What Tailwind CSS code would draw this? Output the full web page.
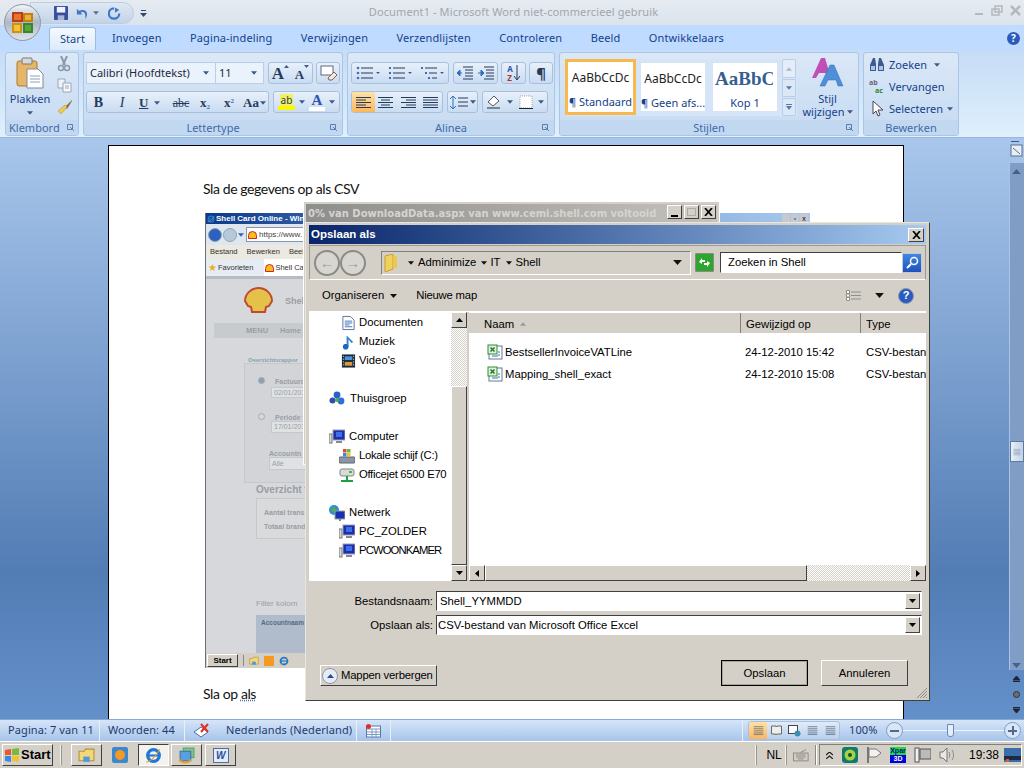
<!DOCTYPE html>
<html lang="en">
<head>
  <meta charset="UTF-8">
  <title>Document1 - Microsoft Word</title>
  <script src="https://cdn.jsdelivr.net/npm/@tailwindcss/browser@4"></script>
</head>
<body class="bg-[#d4d0c8] font-['Noto_Sans',sans-serif] overflow-hidden">
  <svg class="hidden">
    <symbol id="arr" viewBox="0 0 7 4"><path d="M0 0h7L3.5 4z"/></symbol>
    <symbol id="folder" viewBox="0 0 16 16"><path d="M1 4h5l1-2h8v11H1z" fill="#f4d67a" stroke="#b8912f"/><path d="M5 9h6v5H5z" fill="#4f9ad8"/></symbol>
    <symbol id="docs" viewBox="0 0 16 16"><path d="M2 1h8l4 4v10H2z" fill="#fff" stroke="#5c6f96"/><path d="M4 6h8M4 8h8M4 10h5M4 12h8" stroke="#3f6fc0"/></symbol>
    <symbol id="music" viewBox="0 0 16 16"><path d="M6 1l7 7-2 1-3-4v8H3l1-3h2z" fill="#2f7fd6"/><circle cx="5" cy="13" r="3" fill="#1f66c0"/></symbol>
    <symbol id="video" viewBox="0 0 16 16"><rect x="1" y="1" width="14" height="14" fill="#1d2a3a"/><rect x="4" y="3" width="8" height="4" fill="#4e94d8"/><rect x="4" y="9" width="8" height="4" fill="#d99a3d"/><path d="M2 3h1M2 6h1M2 9h1M2 12h1M13 3h1M13 6h1M13 9h1M13 12h1" stroke="#fff"/></symbol>
    <symbol id="group" viewBox="0 0 16 16"><circle cx="8" cy="4" r="3.4" fill="#2660c8"/><circle cx="3.5" cy="9.5" r="3" fill="#2f4fb0"/><circle cx="12" cy="10" r="3.4" fill="#2c70d8"/><circle cx="8" cy="9" r="2" fill="#4cae3c"/></symbol>
    <symbol id="pc" viewBox="0 0 16 16"><rect x="0" y="5" width="3" height="9" fill="#d8d8d0" stroke="#777"/><rect x="4" y="1" width="12" height="10" fill="#1c2fb0" stroke="#9aa0a8"/><path d="M7 3h6v5H7z" fill="#3f6fe8"/><path d="M7 13h6" stroke="#888" stroke-width="2"/></symbol>
    <symbol id="disk" viewBox="0 0 16 16"><rect x="0" y="9" width="16" height="6" rx="1" fill="#8b97a5" stroke="#5c6670"/><rect x="4" y="1" width="3.5" height="3.5" fill="#e5492f"/><rect x="8" y="1" width="3.5" height="3.5" fill="#6ab73a"/><rect x="4" y="5" width="3.5" height="3.5" fill="#3f88e0"/><rect x="8" y="5" width="3.5" height="3.5" fill="#f1c22e"/></symbol>
    <symbol id="printer" viewBox="0 0 16 16"><rect x="1" y="2" width="14" height="7" rx="2" fill="#d8dcd8" stroke="#808880"/><path d="M8 9v4M2 14h12" stroke="#20a040" stroke-width="2"/><rect x="10" y="4" width="3" height="2" fill="#50b050"/></symbol>
    <symbol id="net" viewBox="0 0 16 16"><circle cx="5" cy="5" r="5" fill="#2f8fd0"/><path d="M2 3l4-1 1 3-4 2z" fill="#50b040"/><rect x="6" y="6" width="10" height="8" fill="#1c2fb0" stroke="#9aa0a8"/><path d="M11 14v2" stroke="#888" stroke-width="2"/></symbol>
    <symbol id="xls" viewBox="0 0 16 16"><rect x="2" y="2" width="13" height="13" fill="#fff" stroke="#5c7aa0"/><rect x="1" y="1" width="9" height="9" fill="#dff0d8" stroke="#2f8a3a"/><path d="M3.5 3.5l4 4M7.500 3.500l-4 4" stroke="#207a2c" stroke-width="1.500"/><path d="M11 8h2M11 11h2M5 12h6" stroke="#3f6fa8"/></symbol>
    <symbol id="ie" viewBox="0 0 16 16"><circle cx="8" cy="8" r="5.500" fill="none" stroke="#1f78d8" stroke-width="3"/><path d="M3 8h10" stroke="#1f78d8" stroke-width="2"/><path d="M1 14c2 1 10-5 13-12" fill="none" stroke="#e8a020"/></symbol>
    <symbol id="lines" viewBox="0 0 16 14"><path d="M1 1.500h14M1 4.500h14M1 7.500h14M1 10.500h14M1 13h14" stroke="currentColor"/></symbol>
  </svg>

  <!-- Word window -->
  <div class="w-[1024px] h-[768px] flex flex-col relative overflow-hidden">
    <!-- Title row -->
    <div class="h-[25px] bg-gradient-to-b from-[#e6ebf1] to-[#dbe3ec] relative flex items-center justify-center text-[11px] text-[#a2a6ac] tracking-[0.1px] shrink-0">
      <span class="ml-[3px]">Document1 - Microsoft Word niet-commercieel gebruik</span>
      <div class="absolute right-[2px] top-[4px] flex gap-[5px] text-[#b4b8bf]">
        <svg class="w-[13px] h-[13px]" viewBox="0 0 13 13"><path d="M2 10h8" stroke="currentColor" stroke-width="2"/></svg>
        <svg class="w-[13px] h-[13px]" viewBox="0 0 13 13"><path d="M4 2h7v6H4zM1 5h7v6H1z" fill="none" stroke="currentColor" stroke-width="1.500"/></svg>
        <svg class="w-[13px] h-[13px]" viewBox="0 0 13 13"><path d="M2 2l9 9M11 2l-9 9" stroke="currentColor" stroke-width="2.500"/></svg>
      </div>
    </div>

    <!-- Quick access, over title row -->
    <div class="absolute left-[30px] top-[2px] w-[104px] h-[22px] rounded-r-[12px] bg-gradient-to-b from-[#dfe8f4] to-[#c2d3e8] border border-[#bfcde0] flex items-center pl-[23px] gap-[7px] z-10">
      <svg class="w-[14px] h-[14px]" viewBox="0 0 15 15"><rect width="15" height="15" rx="1" fill="#3a4f9a"/><rect x="3" y="1" width="9" height="6" fill="#eef2fb"/><rect x="4" y="10" width="7" height="5" fill="#a9b6d8"/></svg>
      <svg class="w-[14px] h-[13px]" viewBox="0 0 15 14"><path d="M2 2v6h6L6 6c3-2 6 0 5 7 4-5 2-12-7-9z" fill="#3f78c8"/></svg>
      <svg class="w-[6px] h-[4px] text-[#5a6f90] -ml-[3px]" fill="currentColor"><use href="#arr"/></svg>
      <svg class="w-[13px] h-[13px] ml-[2px]" viewBox="0 0 15 14"><path d="M7 1a6 6 0 1 0 6 6" fill="none" stroke="#3f78c8" stroke-width="2.500"/><path d="M8 0v6l5-3z" fill="#3f78c8"/></svg>
    </div>
    <svg class="absolute left-[140px] top-[10px] w-[7px] h-[7px] z-10 text-[#34486a]" viewBox="0 0 7 7"><path d="M1 0h5v1H1zM0 3h7L3.500 7z" fill="currentColor"/></svg>

    <!-- Office button -->
    <div class="absolute left-[4px] top-[4px] w-[37px] h-[37px] rounded-full bg-gradient-to-b from-[#f3f5f8] via-[#aeb9c7] to-[#dfe4ea] border border-[#8c97a6] z-20 flex items-center justify-center">
      <svg class="w-[23px] h-[23px]" viewBox="0 0 23 23"><path d="M2 2h9v8H2z" fill="#e9722c" stroke="#b5401a" stroke-width="2"/><path d="M13 3h8v7h-8z" fill="#eab23a" stroke="#c47f12" stroke-width="2"/><path d="M2 13h8v8H2z" fill="#f0c53a" stroke="#d09010" stroke-width="2"/><path d="M13 13h8v8h-8z" fill="#58a838" stroke="#3a8430" stroke-width="2"/></svg>
    </div>

    <!-- Tabs -->
    <div class="h-[25px] bg-[#bfdbff] flex items-end text-[11px] text-[#15428b] shrink-0 tracking-[0.1px]">
      <div class="ml-[49px] w-[47px] h-[23px] bg-gradient-to-b from-[#f4f9ff] to-[#dcebfb] border border-b-0 border-[#9ebbdd] rounded-t-[3px] flex items-center justify-center">Start</div>
      <div class="flex items-center h-[23px] gap-[28.500px] pl-[16px]">
        <span>Invoegen</span><span>Pagina-indeling</span><span>Verwijzingen</span><span>Verzendlijsten</span><span>Controleren</span><span>Beeld</span><span>Ontwikkelaars</span>
      </div>
      <div class="ml-auto mr-[3px] mb-[4px] w-[15px] h-[15px] rounded-full bg-[#2a5bc0] border border-[#dbe8f8] text-white text-[10px] font-bold flex items-center justify-center">?</div>
    </div>

    <!-- Ribbon -->
    <div class="h-[88px] bg-gradient-to-b from-[#c6dcf6] to-[#dff0fc] border-b border-[#9ab8dc] flex gap-[4px] pl-[5px] pr-[2px] pt-[2px] shrink-0 text-[#15428b] text-[11px]">
      <!-- Klembord -->
      <div class="w-[74px] h-[84px] rounded-[3px] border border-[#a9c6e6] bg-gradient-to-b from-[#dbe8f7] to-[#c5daf2] flex flex-col overflow-hidden">
        <div class="flex-1 flex">
          <div class="w-[48px] flex flex-col items-center pt-[4px]">
            <svg class="w-[28px] h-[32px]" viewBox="0 0 28 32"><rect x="1" y="4" width="20" height="25" rx="2" fill="#e6b568" stroke="#a87a30"/><rect x="6" y="1" width="10" height="6" rx="1" fill="#d8d8d8" stroke="#777"/><path d="M11 12h11l5 5v14H11z" fill="#fff" stroke="#7d8ba0"/><path d="M14 19h10M14 22h10M14 25h10" stroke="#8fa0b8"/></svg>
            <span class="mt-[2px] leading-[16px]">Plakken</span>
            <svg class="w-[6px] h-[4px] mt-[4px] text-[#3d5a8a]" fill="currentColor"><use href="#arr"/></svg>
          </div>
          <div class="flex-1 flex flex-col items-start pl-[3px] pt-[3px] gap-[6px]">
            <svg class="w-[14px] h-[16px]" viewBox="0 0 14 16"><path d="M4 0l4 9M10 0L6 9" stroke="#8d99a8" stroke-width="2"/><circle cx="4" cy="12" r="2.500" fill="none" stroke="#8d99a8" stroke-width="1.500"/><circle cx="10" cy="12" r="2.500" fill="none" stroke="#8d99a8" stroke-width="1.500"/></svg>
            <svg class="w-[15px] h-[15px]" viewBox="0 0 15 15"><path d="M1 1h7v9H1z" fill="#eef2f7" stroke="#9aa6b5"/><path d="M6 5h8v9H6z" fill="#f6f8fb" stroke="#9aa6b5"/><path d="M8 8h4M8 10h4" stroke="#9aa6b5"/></svg>
            <svg class="w-[16px] h-[16px]" viewBox="0 0 16 16"><path d="M15 1L8 8l2 2 5-8z" fill="#8d6a3a"/><path d="M8 6L1 12l3 3 6-7z" fill="#f0cb50" stroke="#a88a28" stroke-width="0.500"/></svg>
          </div>
        </div>
        <div class="h-[15px] pt-[1px] bg-[#c2d8f1] flex items-center px-[3px] justify-between text-[#3e6aaa]"><span>Klembord</span><svg class="w-[8px] h-[8px]" viewBox="0 0 8 8"><path d="M.5.5h5v5h-5zM3 3l4 4" fill="none" stroke="#5a7fb0"/></svg></div>
      </div>

      <!-- Lettertype -->
      <div class="w-[260px] h-[84px] rounded-[3px] border border-[#a9c6e6] bg-gradient-to-b from-[#dbe8f7] to-[#c5daf2] flex flex-col overflow-hidden">
        <div class="flex-1 pl-[2px] pt-[9px] flex flex-col gap-[7px]">
          <div class="flex h-[22px]">
            <div class="w-[130px] bg-[#eaf2fb] border border-[#b9cfe8] text-[#1c2a44] flex items-center justify-between pl-[3px] pr-[6px]"><span>Calibri (Hoofdtekst)</span><svg class="w-[6px] h-[4px] text-[#3d5a8a]" fill="currentColor"><use href="#arr"/></svg></div>
            <div class="w-[48px] bg-[#eaf2fb] border border-l-0 border-[#b9cfe8] text-[#1c2a44] flex items-center justify-between pl-[3px] pr-[6px]"><span>11</span><svg class="w-[6px] h-[4px] text-[#3d5a8a]" fill="currentColor"><use href="#arr"/></svg></div>
            <div class="ml-[4px] w-[45px] rounded-[3px] border border-[#a9c0dc] bg-gradient-to-b from-[#e8f0fa] to-[#c9dcf2] flex items-center justify-around font-['Liberation_Serif'] font-bold text-[#263a5a]">
              <span class="flex items-start"><span class="text-[17px] leading-none">A</span><svg class="w-[5px] h-[3px] rotate-180 text-[#3d5a8a]" fill="currentColor"><use href="#arr"/></svg></span>
              <span class="flex items-start"><span class="text-[13px] leading-none mt-[3px]">A</span><svg class="w-[5px] h-[3px] text-[#3d5a8a]" fill="currentColor"><use href="#arr"/></svg></span>
            </div>
            <div class="ml-[3px] w-[24px] rounded-[3px] border border-[#a9c0dc] bg-gradient-to-b from-[#e8f0fa] to-[#c9dcf2] flex items-center justify-center"><svg class="w-[17px] h-[16px]" viewBox="0 0 17 16"><rect x="1" y="1" width="12" height="9" fill="#fff" stroke="#5a6a80"/><path d="M8 13l6-6 3 3-5 5H9z" fill="#f4e8e0" stroke="#806050"/></svg></div>
          </div>
          <div class="flex h-[22px]">
            <div class="w-[183px] rounded-[3px] border border-[#a9c0dc] bg-gradient-to-b from-[#e8f0fa] to-[#c9dcf2] grid grid-cols-[23px_24px_35px_24px_24px_24px_29px] items-center text-center font-['Liberation_Serif'] text-[#263a5a]">
              <span class="font-bold text-[14px]">B</span><span class="italic text-[14px]">I</span>
              <span class="flex items-center pl-[5px] gap-[6px]"><span class="underline font-bold text-[13px]">U</span><svg class="w-[6px] h-[4px] text-[#3d5a8a]" fill="currentColor"><use href="#arr"/></svg></span>
              <span class="line-through text-[12px]">abc</span><span class="font-bold text-[13px]">x<sub class="text-[7px] text-[#3f6fb0]">2</sub></span><span class="font-bold text-[13px]">x<sup class="text-[7px] text-[#3f6fb0]">2</sup></span>
              <span class="flex items-center pl-[2px] gap-[1px]"><span class="font-bold text-[13px]">Aa</span><svg class="w-[6px] h-[4px] text-[#3d5a8a]" fill="currentColor"><use href="#arr"/></svg></span>
            </div>
            <div class="ml-[4px] w-[67px] rounded-[3px] border border-[#a9c0dc] bg-gradient-to-b from-[#e8f0fa] to-[#c9dcf2] flex items-center justify-around px-[2px]">
              <div class="flex flex-col items-center"><span class="text-[10px] leading-[12px] text-[#263a5a] bg-[#f2f060] px-[1px]">ab</span><div class="w-[17px] h-[4px] bg-[#f8f800]"></div></div>
              <svg class="w-[6px] h-[4px] text-[#3d5a8a]" fill="currentColor"><use href="#arr"/></svg>
              <div class="flex flex-col items-center"><span class="font-['Liberation_Serif'] font-bold text-[15px] leading-[14px] text-[#2a55a8]">A</span><div class="w-[16px] h-[4px] bg-white"></div></div>
              <svg class="w-[6px] h-[4px] text-[#3d5a8a]" fill="currentColor"><use href="#arr"/></svg>
            </div>
          </div>
        </div>
        <div class="h-[15px] pt-[1px] bg-[#c2d8f1] flex items-center justify-center relative text-[#3e6aaa]"><span>Lettertype</span><svg class="absolute right-[4px] w-[8px] h-[8px]" viewBox="0 0 8 8"><path d="M.5.5h5v5h-5zM3 3l4 4" fill="none" stroke="#5a7fb0"/></svg></div>
      </div>

      <!-- Alinea -->
      <div class="w-[208px] h-[84px] rounded-[3px] border border-[#a9c6e6] bg-gradient-to-b from-[#dbe8f7] to-[#c5daf2] flex flex-col overflow-hidden">
        <div class="flex-1 pl-[3px] pt-[9px] flex flex-col gap-[7px] text-[#263a5a]">
          <div class="flex h-[22px]">
            <div class="w-[98px] rounded-[3px] border border-[#a9c0dc] bg-gradient-to-b from-[#e8f0fa] to-[#c9dcf2] grid grid-cols-3 items-center justify-items-center">
              <svg class="w-[24px] h-[14px]" viewBox="0 0 24 14"><path d="M5 2h12M5 7h12M5 12h12" stroke="#263a5a"/><circle cx="2" cy="2" r="1.300" fill="#3f6fb0"/><circle cx="2" cy="7" r="1.300" fill="#3f6fb0"/><circle cx="2" cy="12" r="1.300" fill="#3f6fb0"/><path d="M20 6h4l-2 2z" fill="#3d5a8a"/></svg>
              <svg class="w-[24px] h-[14px]" viewBox="0 0 24 14"><path d="M5 2h12M5 7h12M5 12h12" stroke="#263a5a"/><path d="M1 1h2v2H1zM1 6h2v2H1zM1 11h2v2H1z" fill="#3f6fb0"/><path d="M20 6h4l-2 2z" fill="#3d5a8a"/></svg>
              <svg class="w-[24px] h-[14px]" viewBox="0 0 24 14"><path d="M5 2h12M9 7h8M12 12h5" stroke="#263a5a"/><path d="M1 1h2v2H1zM5 6h2v2H5zM8 11h2v2H8z" fill="#3f6fb0"/><path d="M20 6h4l-2 2z" fill="#3d5a8a"/></svg>
            </div>
            <div class="ml-[4px] w-[45px] rounded-[3px] border border-[#a9c0dc] bg-gradient-to-b from-[#e8f0fa] to-[#c9dcf2] flex items-center justify-around">
              <svg class="w-[16px] h-[14px]" viewBox="0 0 16 14"><path d="M6 1h10M8 4h8M8 7h8M8 10h8M6 13h10" stroke="#263a5a"/><path d="M5 7H0M0 7l3-3v6z" fill="#2f6fc0" stroke="#2f6fc0"/></svg>
              <svg class="w-[16px] h-[14px]" viewBox="0 0 16 14"><path d="M6 1h10M8 4h8M8 7h8M8 10h8M6 13h10" stroke="#263a5a"/><path d="M0 7h5M6 7L3 4v6z" fill="#2f6fc0" stroke="#2f6fc0"/></svg>
            </div>
            <div class="ml-[3px] w-[25px] rounded-[3px] border border-[#a9c0dc] bg-gradient-to-b from-[#e8f0fa] to-[#c9dcf2] flex items-center justify-center gap-[1px] font-bold text-[8px] leading-[9px]"><span class="flex flex-col"><span class="text-[#2a55a8]">A</span><span class="text-[#b03030]">Z</span></span><svg class="w-[6px] h-[16px]" viewBox="0 0 6 16"><path d="M3 0v14M0 11l3 4 3-4" fill="none" stroke="#263a5a"/></svg></div>
            <div class="ml-[3px] w-[24px] rounded-[3px] border border-[#a9c0dc] bg-gradient-to-b from-[#e8f0fa] to-[#c9dcf2] flex items-center justify-center font-bold text-[15px] leading-none">¶</div>
          </div>
          <div class="flex h-[22px]">
            <div class="w-[92px] rounded-[3px] border border-[#a9c0dc] bg-gradient-to-b from-[#e8f0fa] to-[#c9dcf2] grid grid-cols-4 items-center justify-items-center overflow-hidden">
              <div class="w-full h-full bg-gradient-to-b from-[#fde3a8] to-[#fbb65c] flex items-center justify-center"><svg class="w-[15px] h-[11px]" viewBox="0 0 15 11"><path d="M0 .5h15M0 3h10M0 5.500h15M0 8h10M0 10.500h15" stroke="#263a5a"/></svg></div>
              <svg class="w-[15px] h-[11px]" viewBox="0 0 15 11"><path d="M0 .5h15M3 3h9M0 5.500h15M3 8h9M0 10.500h15" stroke="#263a5a"/></svg>
              <svg class="w-[15px] h-[11px]" viewBox="0 0 15 11"><path d="M0 .5h15M5 3h10M0 5.500h15M5 8h10M0 10.500h15" stroke="#263a5a"/></svg>
              <svg class="w-[15px] h-[11px]" viewBox="0 0 15 11"><path d="M0 .5h15M0 3h15M0 5.500h15M0 8h15M0 10.500h15" stroke="#263a5a"/></svg>
            </div>
            <div class="ml-[4px] w-[31px] rounded-[3px] border border-[#a9c0dc] bg-gradient-to-b from-[#e8f0fa] to-[#c9dcf2] flex items-center justify-center gap-[1px]"><svg class="w-[19px] h-[15px]" viewBox="0 0 19 15"><path d="M3 1v13M0 4l3-3 3 3M0 11l3 3 3-3" fill="none" stroke="#2f6fc0"/><path d="M8 3h10M8 7h10M8 11h10" stroke="#263a5a"/></svg><svg class="w-[6px] h-[4px] text-[#3d5a8a]" fill="currentColor"><use href="#arr"/></svg></div>
            <div class="ml-[4px] w-[66px] rounded-[3px] border border-[#a9c0dc] bg-gradient-to-b from-[#e8f0fa] to-[#c9dcf2] flex items-center justify-around">
              <svg class="w-[16px] h-[16px]" viewBox="0 0 16 16"><path d="M2 8l6-6 5 5-6 5z" fill="#fff" stroke="#556"/><path d="M1 14h13" stroke="#788" stroke-width="2"/></svg>
              <svg class="w-[6px] h-[4px] text-[#3d5a8a]" fill="currentColor"><use href="#arr"/></svg>
              <svg class="w-[14px] h-[14px]" viewBox="0 0 14 14"><path d="M1 1h12v12H1z" fill="#fff" stroke="#9ab" stroke-dasharray="1 1"/><path d="M0 13.500h14" stroke="#223"/></svg>
              <svg class="w-[6px] h-[4px] text-[#3d5a8a]" fill="currentColor"><use href="#arr"/></svg>
            </div>
          </div>
        </div>
        <div class="h-[15px] pt-[1px] bg-[#c2d8f1] flex items-center justify-center relative text-[#3e6aaa]"><span>Alinea</span><svg class="absolute right-[4px] w-[8px] h-[8px]" viewBox="0 0 8 8"><path d="M.5.5h5v5h-5zM3 3l4 4" fill="none" stroke="#5a7fb0"/></svg></div>
      </div>

      <!-- Stijlen -->
      <div class="w-[300px] h-[84px] rounded-[3px] border border-[#a9c6e6] bg-gradient-to-b from-[#dbe8f7] to-[#c5daf2] flex flex-col overflow-hidden">
        <div class="flex-1 flex pl-[5px] pt-[6px]">
          <div class="w-[232px] h-[57px] bg-[#d5e4f6] flex items-start">
            <div class="w-[71px] h-[56px] border-[3px] border-[#f8b850] bg-white text-center text-[#15428b] shrink-0 overflow-hidden">
              <div class="text-[12px] leading-[16px] mt-[8px] text-[#222] whitespace-nowrap">AaBbCcDc</div>
              <div class="text-[11px] leading-[16px] mt-[8px] whitespace-nowrap">¶ Standaard</div>
            </div>
            <div class="ml-[5px] mt-[4px] w-[64px] h-[48px] bg-white text-center text-[#15428b] shrink-0 overflow-hidden">
              <div class="text-[12px] leading-[16px] mt-[8px] text-[#222] whitespace-nowrap">AaBbCcDc</div>
              <div class="text-[11px] leading-[16px] mt-[8px] whitespace-nowrap">¶ Geen afs...</div>
            </div>
            <div class="ml-[8px] mt-[4px] w-[64px] h-[48px] bg-white text-center text-[#15428b] shrink-0 overflow-hidden">
              <div class="font-['Liberation_Serif'] font-bold text-[#365f91] text-[19px] leading-[16px] mt-[8px] whitespace-nowrap text-left pl-[2px] w-[60px] overflow-hidden">AaBbCc</div>
              <div class="text-[11px] leading-[16px] mt-[8px]">Kop 1</div>
            </div>
            <div class="ml-[5px] w-[14px] h-[57px] flex flex-col gap-[1px] shrink-0">
              <div class="h-[19px] rounded-t-[2px] bg-[#e4edf8] border border-[#b9cfe8] flex items-center justify-center text-[#a9b6c8]"><svg class="w-[6px] h-[4px] rotate-180" fill="currentColor"><use href="#arr"/></svg></div>
              <div class="h-[18px] bg-[#dce8f6] border border-[#b9cfe8] flex items-center justify-center text-[#5a7aa8]"><svg class="w-[6px] h-[4px]" fill="currentColor"><use href="#arr"/></svg></div>
              <div class="h-[18px] rounded-b-[2px] bg-[#dce8f6] border border-[#b9cfe8] flex items-center justify-center text-[#5a7aa8]"><svg class="w-[6px] h-[6px]" viewBox="0 0 6 6" fill="currentColor"><path d="M0 0h6v1H0zM0 2h6L3 6z"/></svg></div>
            </div>
          </div>
          <div class="flex-1 flex flex-col items-center">
            <svg class="w-[32px] h-[32px] -mt-[1px]" viewBox="0 0 32 32"><path d="M0 20L9 0h4l6 20h-4l-1-5H7l-3 5z" fill="#c050b8"/><path d="M8 28L18 7h4l9 21h-5l-2-6h-8l-3 6z" fill="#4f8fd8" stroke="#2f6fb8" stroke-width="0.500"/></svg>
            <span class="leading-[13px] mt-[2px]">Stijl</span>
            <span class="leading-[13px] flex items-center gap-[2px]">wijzigen <svg class="w-[6px] h-[4px] text-[#3d5a8a]" fill="currentColor"><use href="#arr"/></svg></span>
          </div>
        </div>
        <div class="h-[15px] pt-[1px] bg-[#c2d8f1] flex items-center justify-center relative text-[#3e6aaa]"><span>Stijlen</span><svg class="absolute right-[4px] w-[8px] h-[8px]" viewBox="0 0 8 8"><path d="M.5.5h5v5h-5zM3 3l4 4" fill="none" stroke="#5a7fb0"/></svg></div>
      </div>

      <!-- Bewerken -->
      <div class="w-[96px] h-[84px] rounded-[3px] border border-[#a9c6e6] bg-gradient-to-b from-[#dbe8f7] to-[#c5daf2] flex flex-col overflow-hidden">
        <div class="flex-1 flex flex-col pl-[5px] pt-[1px]">
          <div class="h-[22px] flex items-center gap-[4px]"><svg class="w-[16px] h-[14px]" viewBox="0 0 16 14"><path d="M4 0h2l1 6v7H1V7zM10 0h2l3 7v6H9V6z" fill="#3f5a90"/><rect x="2" y="8" width="4" height="4" fill="#a9c4e6"/><rect x="10" y="8" width="4" height="4" fill="#a9c4e6"/></svg><span>Zoeken</span><svg class="w-[6px] h-[4px] ml-[3px] text-[#3d5a8a]" fill="currentColor"><use href="#arr"/></svg></div>
          <div class="h-[22px] flex items-center"><span class="w-[16px] flex flex-col font-bold text-[7px] leading-[8px]"><span class="text-[#667]">ab</span><span class="text-[#2a8a30] pl-[6px]">ac</span></span><span class="ml-[4px]">Vervangen</span></div>
          <div class="h-[22px] flex items-center gap-[4px] pl-[3px]"><svg class="w-[13px] h-[16px]" viewBox="0 0 13 16"><path d="M1 0v13l3-3 2 5 2-1-2-5h5z" fill="#fff" stroke="#445"/></svg><span>Selecteren</span><svg class="w-[6px] h-[4px] text-[#3d5a8a]" fill="currentColor"><use href="#arr"/></svg></div>
        </div>
        <div class="h-[15px] pt-[1px] bg-[#c2d8f1] flex items-center justify-center text-[#3e6aaa]">Bewerken</div>
      </div>
    </div>

    <!-- Document area -->
    <div class="flex-1 flex min-h-0 bg-gradient-to-b from-[#a9c7ec] via-[#527cb4] via-75% to-[#6490ca] relative">
      <div class="w-[108px] shrink-0"></div>
      <div class="w-[796px] mt-[7px] bg-white border-x border-t border-black pl-[94px] font-['Lato'] text-[14px] tracking-[-0.4px] text-[#111] relative">
        <p class="mt-[33px] leading-[20px]">Sla de gegevens op als CSV</p>
        <p class="absolute left-[94px] top-[538px] leading-[20px]">Sla op <span class="underline decoration-dotted decoration-[#3f6fc0]">als</span></p>
      </div>
      <!-- Vertical scrollbar -->
      <div class="ml-auto w-[16px] mr-0 flex flex-col items-center">
        <svg class="w-[13px] h-[19px] mt-[3px]" viewBox="0 0 13 19"><path d="M1 .5h8" stroke="#3d5a8a"/><rect x="1" y="4" width="11" height="11" fill="#e8eef6" stroke="#5a6f90"/><path d="M3 7l7 6" stroke="#5a6f90"/></svg>
        <div class="w-[15px] h-[507px] mt-[3px] bg-[#7f9dc5] border-l border-[#a9c4e6] flex flex-col items-center relative">
          <svg class="w-[9px] h-[5px] mt-[6px] rotate-180 text-[#45608c]" fill="currentColor"><use href="#arr"/></svg>
          <div class="absolute top-[278px] left-0 w-[14px] h-[21px] bg-gradient-to-r from-[#e9eff7] to-[#c3d3e6] border border-[#5d7aa5] flex items-center justify-center text-[#76869c]"><svg class="w-[8px] h-[8px]" viewBox="0 0 16 14"><use href="#lines"/></svg></div>
          <svg class="w-[9px] h-[5px] mt-auto mb-[2px] text-[#45608c]" fill="currentColor"><use href="#arr"/></svg>
        </div>
        <svg class="w-[7px] h-[7px] mt-[6px]" viewBox="0 0 7 7"><path d="M3.500 0L7 4H0zM0 5.500h7" fill="#223" stroke="#223"/></svg>
        <div class="w-[7px] h-[7px] rounded-full bg-[#6c6c6c] border border-[#333] mt-[8px]"></div>
        <svg class="w-[7px] h-[7px] mt-[8px]" viewBox="0 0 7 7"><path d="M0 1.500h7M3.500 7L0 3h7z" fill="#223" stroke="#223"/></svg>
      </div>
    </div>

    <!-- Status bar -->
    <div class="h-[22px] bg-gradient-to-b from-[#d6e5f8] to-[#a6c4ea] border-t border-[#86a8d4] flex items-center text-[11px] tracking-[0.1px] text-[#1f3a70] shrink-0 whitespace-nowrap">
      <span class="w-[100px] pl-[8px] border-r border-[#e6effa] h-full flex items-center">Pagina: 7 van 11</span>
      <span class="w-[85px] pl-[8px] border-r border-[#e6effa] h-full flex items-center">Woorden: 44</span>
      <div class="w-[172px] pl-[8px] border-r border-[#e6effa] h-full flex items-center gap-[16px]">
        <svg class="w-[17px] h-[15px] shrink-0" viewBox="0 0 17 15"><path d="M1 9l7-5 7 5-7 5z" fill="#fff" stroke="#4a6ea8"/><path d="M8 1l7 8M15 1l-7 8" stroke="#e03020" stroke-width="2"/></svg>
        <span>Nederlands (Nederland)</span>
      </div>
      <div class="w-[34px] border-r border-[#e6effa] h-full flex items-center justify-center">
        <svg class="w-[15px] h-[14px]" viewBox="0 0 15 14"><rect x="0.500" y="2" width="14" height="11" fill="#fff" stroke="#5a78a8"/><path d="M1 5h13M1 8h13M1 10.500h13M6 5v8M10 5v8" stroke="#7a9ac8"/><circle cx="2.500" cy="2.500" r="2.500" fill="#e03020"/></svg>
      </div>
      <div class="ml-auto h-full flex items-center border-l border-[#e6effa] pl-[5px] pr-[3px] gap-[9px]">
        <div class="w-[92px] h-[19px] rounded-[3px] border border-[#a9c0dc] bg-gradient-to-b from-[#e2ecf8] to-[#b9d0ec] grid grid-cols-5 items-center justify-items-center overflow-hidden text-[#4a5a70]">
          <div class="w-full h-full bg-gradient-to-b from-[#fde3a8] to-[#fbb65c] flex items-center justify-center"><svg class="w-[11px] h-[11px]" viewBox="0 0 16 14"><use href="#lines"/></svg></div>
          <svg class="w-[11px] h-[11px]" viewBox="0 0 11 11"><path d="M.5 1h4.500l.500 1 .500-1h4.500v8h-5l-.500 1-.500-1H.5z" fill="#eee" stroke="#6a6a60"/></svg>
          <svg class="w-[13px] h-[12px]" viewBox="0 0 13 12"><rect x=".5" y=".5" width="9" height="8" fill="#fff" stroke="#445"/><circle cx="9.500" cy="8.500" r="3" fill="#3a90b0"/></svg>
          <svg class="w-[11px] h-[11px]" viewBox="0 0 16 14"><use href="#lines"/></svg>
          <svg class="w-[11px] h-[11px]" viewBox="0 0 16 14"><use href="#lines"/></svg>
        </div>
        <span class="w-[28px]">100%</span>
        <div class="w-[135px] flex items-center">
          <div class="w-[17px] h-[17px] rounded-full bg-[#d9e6f6] border border-[#7f9dc5] flex items-center justify-center shrink-0"><div class="w-[9px] h-[2px] bg-[#55698a]"></div></div>
          <div class="flex-1 h-[1px] bg-[#eef4fb] relative"><div class="absolute left-[44px] -top-[6px] w-[7px] h-[13px] bg-[#e4edf8] border border-[#6c8ab4] rounded-b-[3px]"></div></div>
          <div class="w-[17px] h-[17px] rounded-full bg-[#d9e6f6] border border-[#7f9dc5] flex items-center justify-center shrink-0 relative"><div class="w-[9px] h-[2px] bg-[#55698a]"></div><div class="absolute w-[2px] h-[9px] bg-[#55698a]"></div></div>
        </div>
      </div>
    </div>

    <!-- Windows taskbar -->
    <div class="h-[27px] bg-[#d4d0c8] border-t border-white flex items-center pl-[2px] pr-[2px] shrink-0 text-[12px] text-black font-['Liberation_Sans']">
      <div class="w-[52px] h-[22px] bg-[#d4d0c8] border border-t-white border-l-white border-r-[#404040] border-b-[#404040] flex items-center gap-[1px] pl-[1px] font-bold text-[13px]">
        <svg class="w-[16px] h-[16px]" viewBox="0 0 16 16"><path d="M1 3l6-1v6H1z" fill="#e8582a"/><path d="M8 2l7-1v7H8z" fill="#7cb83a"/><path d="M1 9h6v6l-6-1z" fill="#3f88e0"/><path d="M8 9h7v6l-7-1z" fill="#f1c22e"/></svg>
        <span>Start</span>
      </div>
      <div class="ml-[7px] w-[2px] h-[20px] bg-[#f2f0ea] border-r border-[#9a968c]"></div>
      <div class="ml-[9px] w-[32px] h-[22px] border border-t-white border-l-white border-r-[#404040] border-b-[#404040] flex items-center justify-center"><svg class="w-[17px] h-[17px]"><use href="#folder"/></svg></div>
      <div class="ml-[10px] w-[16px] h-[16px] rounded-[2px] bg-[#3f88d0] flex items-center justify-center"><div class="w-[10px] h-[10px] rounded-full bg-[#f49a20]"></div></div>
      <div class="ml-[10px] w-[32px] h-[22px] bg-[#f4f2ee] border border-t-[#404040] border-l-[#404040] border-r-white border-b-white flex items-center justify-center"><svg class="w-[17px] h-[17px]"><use href="#ie"/></svg></div>
      <div class="ml-[2px] w-[32px] h-[22px] border border-t-white border-l-white border-r-[#404040] border-b-[#404040] flex items-center justify-center"><svg class="w-[17px] h-[17px]" viewBox="0 0 16 16"><rect x="5" y="1" width="10" height="9" fill="#8fbf80" stroke="#4a7"/><rect x="2" y="4" width="10" height="9" fill="#5aa0e0" stroke="#37a"/><path d="M1 12c4 4 9 3 11 0" fill="none" stroke="#e8a020" stroke-width="2"/></svg></div>
      <div class="ml-[3px] w-[32px] h-[22px] border border-t-white border-l-white border-r-[#404040] border-b-[#404040] flex items-center justify-center"><div class="w-[16px] h-[15px] bg-[#e4eaf6] border border-[#4a6ea8] text-[#2a4f9a] font-bold italic text-[10px] leading-[13px] text-center">W</div></div>
      <div class="ml-[519px] w-[2px] h-[20px] bg-[#f2f0ea] border-r border-[#9a968c]"></div>
      <span class="ml-[9px] w-[15px]">NL</span>
      <div class="ml-[4px] w-[2px] h-[20px] bg-[#f2f0ea] border-r border-[#9a968c]"></div>
      <svg class="ml-[6px] w-[16px] h-[13px] text-[#8c8a84]" viewBox="0 0 16 13"><rect x=".5" y="4" width="15" height="8" fill="#d4d0c8" stroke="currentColor"/><path d="M3 6h10M3 8h10M5 10h6M8 4c0-3 5-1 5-4" fill="none" stroke="currentColor"/></svg>
      <div class="ml-[6px] w-[2px] h-[20px] bg-[#888] border-r border-white"></div>
      <div class="ml-[2px] flex-1 h-[22px] border border-t-[#808080] border-l-[#808080] border-r-white border-b-white flex items-center pl-[6px] relative">
        <svg class="w-[7px] h-[7px]" viewBox="0 0 7 7"><path d="M0 3l3.500-3L7 3M0 7l3.500-3L7 7" fill="none" stroke="#222" stroke-width="1.200"/></svg>
        <svg class="ml-[9px] w-[16px] h-[16px]" viewBox="0 0 16 16"><rect width="16" height="16" rx="3" fill="#0f7a6a"/><circle cx="8" cy="8" r="5.500" fill="#a8d040"/><circle cx="8" cy="8" r="2" fill="#145030"/></svg>
        <svg class="ml-[8px] w-[17px] h-[16px]" viewBox="0 0 17 16"><path d="M2 0v16" stroke="#777" stroke-width="2"/><path d="M3 2h7l5 4-5 4H3z" fill="#f4f2ee" stroke="#777"/></svg>
        <div class="ml-[7px] w-[16px] h-[17px] flex flex-col font-bold text-[7px] leading-[8px] text-center"><span class="bg-[#20e020] text-[#0000c0]">Xpar</span><span class="bg-[#0000e0] text-white">3D</span></div>
        <svg class="ml-[8px] w-[17px] h-[16px]" viewBox="0 0 17 16"><rect x="6" y="2" width="11" height="10" fill="#bbb" stroke="#555"/><rect x="1" y="1" width="4" height="14" fill="#f0f0f0" stroke="#555"/></svg>
        <svg class="ml-[8px] w-[16px] h-[16px]" viewBox="0 0 16 16"><path d="M1 5h3l4-4v14l-4-4H1z" fill="#e8e8e4" stroke="#777"/><path d="M10 5c1 2 1 4 0 6M13 3c2 3 2 7 0 10" fill="none" stroke="#888"/></svg>
        <span class="ml-[14px] w-[28px]">19:38</span>
        <svg class="ml-[7px] w-[17px] h-[14px]" viewBox="0 0 17 14"><rect width="17" height="14" fill="#3a6ea8"/><rect x="0" y="8" width="17" height="4" fill="#1c2a4a"/><rect x="2" y="11" width="3" height="3" fill="#e8582a"/></svg>
      </div>
    </div>

    <!-- Embedded screenshot on the page -->
    <div class="absolute left-[205px] top-[213px] w-[605px] h-[455px] bg-[#d6d8db] border-l border-[#6a7078] overflow-hidden font-['Liberation_Sans']">
      <div class="h-[11px] bg-gradient-to-r from-[#0a3a8a] via-[#6f9ad6] to-[#a8c8ec] flex items-center text-white font-bold text-[8px] pl-[1px] gap-[1px] relative">
        <svg class="w-[8px] h-[8px]"><use href="#ie"/></svg><span>Shell Card Online - Windows</span>
        <div class="absolute right-[2px] top-[1px] flex gap-[1px] text-[7px] leading-[9px] text-black font-normal"><span class="w-[8px] bg-[#c8c8d0] text-center">_</span><span class="w-[8px] bg-[#c8c8d0] text-center">▫</span><span class="w-[8px] bg-[#c8c8d0] text-center">x</span></div>
      </div>
      <div class="h-[21px] bg-[#dfe6ef] flex items-center pl-[2px] gap-[1px]">
        <div class="w-[14px] h-[14px] rounded-full bg-[#2f5fc0] border border-[#8aa]"></div>
        <div class="w-[14px] h-[14px] rounded-full bg-[#b8c8dc] border border-[#8aa]"></div>
        <svg class="w-[6px] h-[4px] text-[#2f5fc0]" fill="currentColor"><use href="#arr"/></svg>
        <div class="ml-[1px] w-[80px] h-[15px] bg-white border border-[#8a97a8] flex items-center gap-[2px] text-[8px] text-[#444]"><div class="w-[9px] h-[8px] ml-[1px] rounded-t-full bg-[#f0c020] border border-[#e02020]"></div>https://www.</div>
      </div>
      <div class="h-[14px] bg-[#ebe9e0] flex items-center pl-[4px] gap-[9px] text-[7.500px] text-[#333]"><span>Bestand</span><span>Bewerken</span><span>Beeld</span></div>
      <div class="h-[17px] bg-[#e6ecf4] flex items-center pl-[2px] text-[7.500px] text-[#333]"><span class="text-[#e8b020] text-[10px] leading-none">★</span><span class="ml-[1px]">Favorieten</span><div class="ml-[11px] pl-[1px] bg-white h-full flex items-center gap-[1px]"><div class="w-[9px] h-[8px] rounded-t-full bg-[#f0c020] border border-[#e02020]"></div>Shell Card</div></div>
      <div class="h-[3px] bg-[#b8bcc2]"></div>
      <div class="relative h-[374px] text-[#9a9ea4] text-[7px] font-bold">
        <svg class="absolute left-[38px] top-[8px] w-[29px] h-[27px]" viewBox="0 0 29 27"><path d="M14.500 1C7 1 1 7 1 14l3 5 3 1 1 5h13l1-5 3-1 3-5C28 7 22 1 14.500 1z" fill="#e4c24a" stroke="#c04a30" stroke-width="2"/></svg>
        <span class="absolute left-[79px] top-[16px] text-[9px]">Shel</span>
        <div class="absolute left-[8px] top-[44px] w-[90px] h-[15px] bg-[#c8cbce] flex items-center pl-[32px] gap-[12px] text-[7.500px]"><span>MENU</span><span>Home</span></div>
        <span class="absolute left-[42px] top-[77px] text-[#8aa0b0] text-[6px]">Overzichtsrappor</span>
        <div class="absolute left-[38px] top-[84px] w-[70px] h-[120px] bg-[#d2d4d7] border border-[#c6c8cb]"></div>
        <div class="absolute left-[52px] top-[98px] w-[7px] h-[7px] rounded-full bg-[#8aa0b8] border border-[#aaa]"></div>
        <span class="absolute left-[69px] top-[98px]">Factuurda</span>
        <div class="absolute left-[65px] top-[108px] w-[40px] h-[11px] bg-[#dfe1e3] border border-[#c0c8d4] font-normal pl-[2px] text-[7px] leading-[9px]">02/01/201</div>
        <div class="absolute left-[52px] top-[134px] w-[7px] h-[7px] rounded-full bg-[#d6d8db] border border-[#aaa]"></div>
        <span class="absolute left-[69px] top-[134px]">Periode t</span>
        <div class="absolute left-[65px] top-[142px] w-[40px] h-[12px] bg-[#dfe1e3] border border-[#c0c8d4] font-normal pl-[2px] text-[7px] leading-[10px]">17/01/201</div>
        <span class="absolute left-[63px] top-[170px]">Accountn</span>
        <div class="absolute left-[63px] top-[178px] w-[40px] h-[13px] bg-[#dfe1e3] border border-[#c0c8d4] font-normal pl-[2px] text-[7px] leading-[11px]">Alle</div>
        <span class="absolute left-[50px] top-[203px] text-[10px]">Overzicht t</span>
        <div class="absolute left-[50px] top-[219px] w-[60px] h-[41px] bg-[#d8dadc] border border-[#c6c8cb]"></div>
        <span class="absolute left-[58px] top-[229px]">Aantal trans</span>
        <span class="absolute left-[58px] top-[243px]">Totaal brand</span>
        <span class="absolute left-[50px] top-[319px] text-[8px] font-normal">Filter kolom</span>
        <div class="absolute left-[50px] top-[336px] w-[50px] h-[38px] bg-[#b0bccb] pl-[5px] pt-[3px] text-[6.500px] text-[#5a6a88]">Accountnaam</div>
      </div>
      <div class="h-[15px] bg-[#d4d0c8] flex items-center pl-[1px] gap-[5px] text-[8px] font-bold text-black"><div class="w-[31px] h-[13px] border border-t-white border-l-white border-r-[#404040] border-b-[#404040] text-center leading-[11px]">Start</div><div class="w-[1px] h-[11px] bg-[#888]"></div><svg class="w-[10px] h-[10px]"><use href="#folder"/></svg><div class="w-[10px] h-[10px] bg-[#f49a20]"></div><svg class="w-[10px] h-[10px]"><use href="#ie"/></svg></div>
    </div>

    <!-- Download progress window -->
    <div class="absolute left-[303px] top-[201px] w-[417px] h-[264px] bg-[#d4d0c8] border border-white pt-[2px] px-[2px] font-['DejaVu_Sans']">
      <div class="h-[18px] bg-gradient-to-r from-[#8e8e8e] to-[#c4c2bd] flex items-center pl-[2px] text-[#d6d4cf] font-bold text-[10px] relative whitespace-nowrap overflow-hidden">
        0% van DownloadData.aspx van www.cemi.shell.com voltooid
        <div class="absolute right-[1px] top-[1px] flex gap-[2px] bg-[#bdbbb6]">
          <div class="w-[15px] h-[14px] bg-[#d4d0c8] border border-t-white border-l-white border-r-[#404040] border-b-[#404040] flex items-end justify-center"><div class="w-[7px] h-[2px] bg-black mb-[1px]"></div></div>
          <div class="w-[15px] h-[14px] bg-[#d4d0c8] border border-t-white border-l-white border-r-[#404040] border-b-[#404040] p-[2px]"><div class="w-full h-full border border-[#b0aca4]"></div></div>
          <div class="w-[15px] h-[14px] bg-[#d4d0c8] border border-t-white border-l-white border-r-[#404040] border-b-[#404040] flex items-center justify-center"><svg class="w-[9px] h-[8px]" viewBox="0 0 9 8"><path d="M1 0l7 8M8 0L1 8" stroke="#000" stroke-width="1.700"/></svg></div>
        </div>
      </div>
    </div>

    <!-- Save dialog -->
    <div class="absolute left-[305px] top-[222px] w-[625px] h-[479px] bg-[#d4d0c8] border border-t-[#e8e6e0] border-l-[#e8e6e0] border-r-[#404040] border-b-[#404040] flex flex-col px-[3px] pt-[2px] font-['Liberation_Sans'] text-[11.300px] text-black">
      <div class="h-[19px] bg-gradient-to-r from-[#0a246a] to-[#a6caf0] flex items-center pl-[2px] pr-[2px] text-white font-bold text-[11.500px] justify-between shrink-0">
        <span>Opslaan als</span>
        <div class="w-[16px] h-[14px] bg-[#d4d0c8] border border-t-white border-l-white border-r-[#404040] border-b-[#404040] flex items-center justify-center"><svg class="w-[9px] h-[8px]" viewBox="0 0 9 8"><path d="M1 0l7 8M8 0L1 8" stroke="#000" stroke-width="1.700"/></svg></div>
      </div>
      <!-- Address row -->
      <div class="h-[35px] mt-[1px] border border-[#9c9a92] border-b-white flex items-center pl-[4px] pr-[1px] shrink-0">
        <div class="w-[26px] h-[26px] rounded-full bg-[#d8d6d0] border-2 border-[#8c8a84] flex items-center justify-center text-[#9c9a92] text-[14px] leading-none">←</div>
        <div class="w-[26px] h-[26px] rounded-full bg-[#d8d6d0] border-2 border-[#8c8a84] flex items-center justify-center text-[#9c9a92] text-[14px] leading-none">→</div>
        <div class="ml-[15px] w-[310px] h-[24px] border border-t-[#808080] border-l-[#808080] border-b-white border-r-white flex items-center pl-[2px] pr-[8px]">
          <svg class="w-[14px] h-[18px]" viewBox="0 0 14 18"><path d="M1 2l8-2v15l-8 3z" fill="#f0d060" stroke="#c8a030"/><path d="M9 2h4v12H9z" fill="#e8c850"/></svg>
          <svg class="ml-[10px] w-[6px] h-[4px]" fill="#111"><use href="#arr"/></svg>
          <span class="ml-[4px]">Adminimize</span>
          <svg class="ml-[5px] w-[6px] h-[4px]" fill="#111"><use href="#arr"/></svg>
          <span class="ml-[3px]">IT</span>
          <svg class="ml-[6px] w-[6px] h-[4px]" fill="#111"><use href="#arr"/></svg>
          <span class="ml-[3px]">Shell</span>
          <svg class="ml-auto w-[9px] h-[5px]" fill="#111"><use href="#arr"/></svg>
        </div>
        <div class="ml-[4px] w-[19px] h-[19px] bg-[#2ea52e] border border-[#8c8a84] rounded-[1px] flex items-center justify-center"><svg class="w-[13px] h-[11px]" viewBox="0 0 13 11"><path d="M1 5l3-4v2h3v2H4v2zM12 6L9 10V8H6V6h3V4z" fill="#fff"/></svg></div>
        <div class="ml-[6px] w-[182px] h-[21px] bg-white border border-t-[#404040] border-l-[#404040] border-b-white border-r-white flex items-center pl-[7px]">Zoeken in Shell</div>
        <div class="w-[20px] h-[20px] bg-gradient-to-b from-[#3f88e0] to-[#2050c0] border border-[#c4c8d0] flex items-center justify-center"><svg class="w-[13px] h-[13px]" viewBox="0 0 13 13"><circle cx="8" cy="5" r="3.500" fill="none" stroke="#fff" stroke-width="1.500"/><path d="M5 8l-4 4" stroke="#fff" stroke-width="2"/></svg></div>
      </div>
      <!-- Toolbar -->
      <div class="h-[32px] flex items-center pl-[13px] pr-[12px] border-b border-white shrink-0">
        <span>Organiseren</span><svg class="ml-[6px] w-[7px] h-[4px]" fill="#111"><use href="#arr"/></svg>
        <span class="ml-[19px] tracking-[-0.2px]">Nieuwe map</span>
        <svg class="ml-auto w-[15px] h-[11px]" viewBox="0 0 15 11"><path d="M.5.5h3v3h-3zM.5 4h3v3h-3zM.5 7.500h3v3h-3z" fill="#fff" stroke="#8f8f8a"/><path d="M5 2h10M5 5.500h10M5 9h10" stroke="#8f8f8a"/></svg>
        <svg class="ml-[14px] w-[9px] h-[5px]" fill="#111"><use href="#arr"/></svg>
        <div class="ml-[14px] w-[16px] h-[16px] rounded-full bg-[#2a5bc0] border border-[#8d97ad] text-white font-bold text-[11px] flex items-center justify-center">?</div>
      </div>
      <!-- Panes -->
      <div class="h-[269px] flex shrink-0">
        <div class="w-[142px] bg-white overflow-hidden pt-[1px]">
          <div class="h-[19px] flex items-center pl-[32px] gap-[3px] whitespace-nowrap"><svg class="w-[15px] h-[16px] shrink-0"><use href="#docs"/></svg><span>Documenten</span></div>
          <div class="h-[19px] flex items-center pl-[32px] gap-[3px]"><svg class="w-[15px] h-[16px] shrink-0"><use href="#music"/></svg><span>Muziek</span></div>
          <div class="h-[19px] flex items-center pl-[32px] gap-[3px]"><svg class="w-[15px] h-[16px] shrink-0"><use href="#video"/></svg><span>Video's</span></div>
          <div class="h-[19px]"></div>
          <div class="h-[19px] flex items-center pl-[20px] gap-[5px]"><svg class="w-[16px] h-[16px] shrink-0"><use href="#group"/></svg><span>Thuisgroep</span></div>
          <div class="h-[19px]"></div>
          <div class="h-[19px] flex items-center pl-[20px] gap-[4px]"><svg class="w-[16px] h-[16px] shrink-0"><use href="#pc"/></svg><span>Computer</span></div>
          <div class="h-[19px] flex items-center pl-[30px] gap-[4px] whitespace-nowrap"><svg class="w-[16px] h-[16px] shrink-0"><use href="#disk"/></svg><span class="tracking-[-0.3px]">Lokale schijf (C:)</span></div>
          <div class="h-[19px] flex items-center pl-[30px] gap-[4px] whitespace-nowrap"><svg class="w-[16px] h-[16px] shrink-0"><use href="#printer"/></svg><span class="tracking-[-0.3px]">Officejet 6500 E70</span></div>
          <div class="h-[19px]"></div>
          <div class="h-[19px] flex items-center pl-[20px] gap-[4px]"><svg class="w-[16px] h-[16px] shrink-0"><use href="#net"/></svg><span>Netwerk</span></div>
          <div class="h-[19px] flex items-center pl-[30px] gap-[4px]"><svg class="w-[16px] h-[16px] shrink-0"><use href="#pc"/></svg><span>PC_ZOLDER</span></div>
          <div class="h-[19px] flex items-center pl-[30px] gap-[4px]"><svg class="w-[16px] h-[16px] shrink-0"><use href="#pc"/></svg><span class="tracking-[-0.9px]">PCWOONKAMER</span></div>
        </div>
        <!-- Tree scrollbar -->
        <div class="w-[16px] flex flex-col bg-[#e6e4de]">
          <div class="h-[16px] bg-[#d4d0c8] border border-t-white border-l-white border-r-[#404040] border-b-[#404040] flex items-center justify-center"><svg class="w-[7px] h-[4px] rotate-180" fill="#000"><use href="#arr"/></svg></div>
          <div class="h-[58px] bg-[repeating-conic-gradient(#d4d0c8_0_25%,#fff_0_50%)] bg-[length:2px_2px]"></div>
          <div class="flex-1 bg-[#d4d0c8] border border-t-white border-l-white border-r-[#404040] border-b-[#404040]"></div>
          <div class="h-[16px] bg-[#d4d0c8] border border-t-white border-l-white border-r-[#404040] border-b-[#404040] flex items-center justify-center"><svg class="w-[7px] h-[4px]" fill="#000"><use href="#arr"/></svg></div>
        </div>
        <!-- File list -->
        <div class="ml-[2px] w-[457px] bg-white flex flex-col">
          <div class="h-[22px] bg-[#d4d0c8] border-t border-white flex border-b border-[#808080] shrink-0">
            <div class="w-[272px] border-r border-[#808080] flex items-center pl-[15px] pt-[2px] gap-[6px]"><span>Naam</span><svg class="w-[6px] h-[4px] rotate-180" fill="#999"><use href="#arr"/></svg></div>
            <div class="w-[120px] border-r border-[#808080] flex items-center pl-[5px] pt-[2px]">Gewijzigd op</div>
            <div class="flex-1 flex items-center pl-[5px] pt-[2px]">Type</div>
          </div>
          <div class="flex-1 pt-[7px]">
            <div class="h-[22px] flex items-center pl-[18px] whitespace-nowrap overflow-hidden"><svg class="w-[16px] h-[16px] shrink-0"><use href="#xls"/></svg><span class="ml-[2px] w-[240px] shrink-0">BestsellerInvoiceVATLine</span><span class="w-[121px] shrink-0">24-12-2010 15:42</span><span>CSV-bestand</span></div>
            <div class="h-[22px] flex items-center pl-[18px] whitespace-nowrap overflow-hidden"><svg class="w-[16px] h-[16px] shrink-0"><use href="#xls"/></svg><span class="ml-[2px] w-[240px] shrink-0">Mapping_shell_exact</span><span class="w-[121px] shrink-0">24-12-2010 15:08</span><span>CSV-bestand</span></div>
          </div>
          <div class="h-[16px] flex shrink-0">
            <div class="w-[16px] bg-[#d4d0c8] border border-t-white border-l-white border-r-[#404040] border-b-[#404040] flex items-center justify-center"><svg class="w-[4px] h-[7px]" viewBox="0 0 4 7"><path d="M4 0v7L0 3.500z"/></svg></div>
            <div class="w-[322px] bg-[#d4d0c8] border border-t-white border-l-white border-r-[#404040] border-b-[#404040]"></div>
            <div class="flex-1 bg-[repeating-conic-gradient(#d4d0c8_0_25%,#fff_0_50%)] bg-[length:2px_2px]"></div>
            <div class="w-[16px] bg-[#d4d0c8] border border-t-white border-l-white border-r-[#404040] border-b-[#404040] flex items-center justify-center"><svg class="w-[4px] h-[7px]" viewBox="0 0 4 7"><path d="M0 0v7l4-3.500z"/></svg></div>
          </div>
        </div>
      </div>
      <!-- Form -->
      <div class="flex items-center h-[20px] mt-[10px] shrink-0 pl-[3px]">
        <span class="w-[124px] text-right pr-[3px]">Bestandsnaam:</span>
        <div class="w-[486px] h-[20px] bg-white border border-t-[#404040] border-l-[#404040] border-r-white border-b-white flex items-center pl-[3px] justify-between pr-[1px]"><span>Shell_YYMMDD</span><div class="w-[15px] h-[16px] bg-[#d4d0c8] border border-t-white border-l-white border-r-[#404040] border-b-[#404040] flex items-center justify-center"><svg class="w-[7px] h-[4px]" fill="#000"><use href="#arr"/></svg></div></div>
      </div>
      <div class="flex items-center h-[20px] mt-[4px] shrink-0 pl-[3px]">
        <span class="w-[124px] text-right pr-[3px]">Opslaan als:</span>
        <div class="w-[486px] h-[20px] bg-white border border-t-[#404040] border-l-[#404040] border-r-white border-b-white flex items-center pl-[1px] justify-between pr-[1px]"><span>CSV-bestand van Microsoft Office Excel</span><div class="w-[15px] h-[16px] bg-[#d4d0c8] border border-t-white border-l-white border-r-[#404040] border-b-[#404040] flex items-center justify-center"><svg class="w-[7px] h-[4px]" fill="#000"><use href="#arr"/></svg></div></div>
      </div>
      <!-- Buttons -->
      <div class="flex items-end mt-[25px] pl-[11px] pr-[18px] h-[26px] shrink-0">
        <div class="w-[117px] h-[21px] border border-t-white border-l-white border-r-[#404040] border-b-[#404040] flex items-center gap-[3px] pl-[1px] whitespace-nowrap">
          <div class="w-[16px] h-[16px] rounded-full bg-[#e8ecf2] border border-[#8898b8] flex items-center justify-center shrink-0"><svg class="w-[7px] h-[4px] rotate-180" fill="#1f4f9a"><use href="#arr"/></svg></div>
          <span class="tracking-[-0.2px]">Mappen verbergen</span>
        </div>
        <div class="ml-auto w-[87px] h-[26px] border border-black outline outline-1 -outline-offset-2 outline-[#a8a49c] flex items-center justify-center">Opslaan</div>
        <div class="ml-[13px] w-[87px] h-[26px] border border-t-white border-l-white border-r-[#404040] border-b-[#404040] flex items-center justify-center">Annuleren</div>
      </div>
      <svg class="absolute right-[1px] bottom-[1px] w-[12px] h-[12px]" viewBox="0 0 12 12"><path d="M11 1L1 11M11 4l-7 7M11 7l-4 4M11 10l-1 1" stroke="#8c8a84"/></svg>
    </div>
  </div>
</body>
</html>
